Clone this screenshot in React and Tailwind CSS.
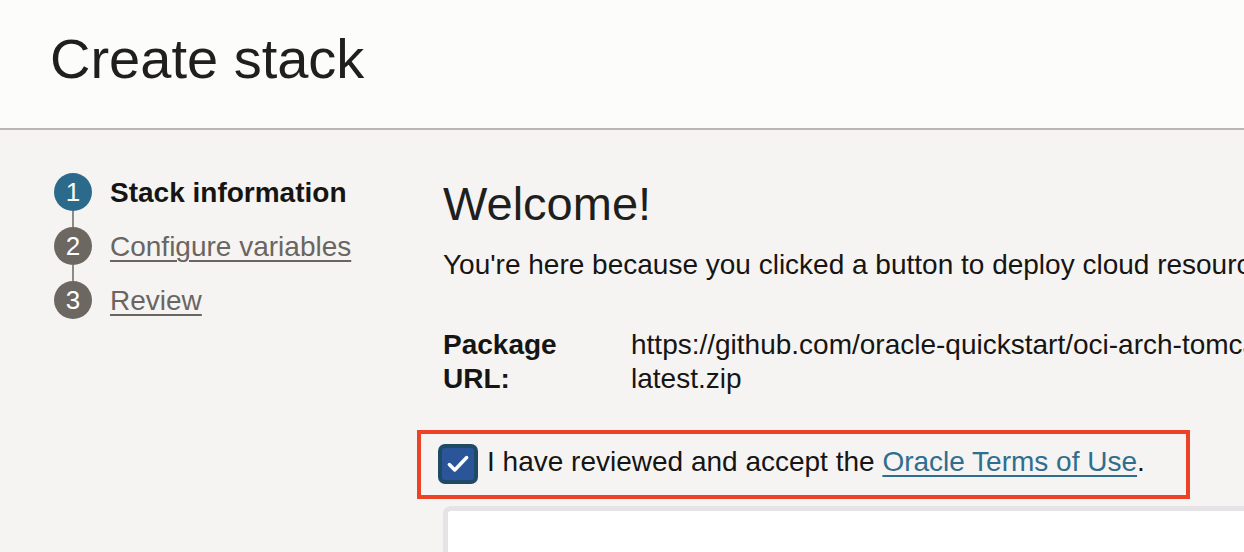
import React from "react";

function Step({ n, label, active, last }) {
  return (
    <div className="flex flex-col">
      <div className="flex items-center h-[38px]">
        <div
          className={
            "w-[38px] h-[38px] rounded-full flex items-center justify-center text-white text-[26px] leading-none " +
            (active ? "bg-[#2c6a8c]" : "bg-[#6d6762]")
          }
        >
          {n}
        </div>
        {active ? (
          <span className="ml-[18px] text-[28px] font-bold text-[#161513] leading-none mt-[2px]">{label}</span>
        ) : (
          <a className="ml-[18px] text-[28px] text-[#6b6560] underline underline-offset-[4px] decoration-[2px] leading-none mt-[2px]">{label}</a>
        )}
      </div>
      {!last && <div className="ml-[18px] w-[2px] h-[16px] bg-[#8f8a86]" />}
    </div>
  );
}

export default function App() {
  return (
    <div className="h-[552px] w-full bg-[#f5f4f2] font-['Liberation_Sans',Arial,sans-serif] overflow-hidden">
      <header className="h-[130px] bg-[#fcfcfb] border-b-2 border-[#bab6b2] flex items-center pl-[50px]">
        <h1 className="text-[56px] text-[#201f1e] leading-none -mt-[10px]">Create stack</h1>
      </header>
      <div className="flex">
        <div className="w-[443px] shrink-0 pl-[54px] pt-[43px]">
          <Step n="1" label="Stack information" active />
          <Step n="2" label="Configure variables" />
          <Step n="3" label="Review" last />
        </div>
        <div className="flex-1 min-w-0 pt-[46px]">
          <h2 className="text-[47px] leading-[56px] text-[#201f1e] whitespace-nowrap">Welcome!</h2>
          <p className="mt-[15px] text-[28px] leading-[36px] text-[#161513] whitespace-nowrap">
            You're here because you clicked a button to deploy cloud resources to your tenancy.
          </p>
          <div className="mt-[45px] grid grid-cols-[188px_1fr] text-[28px] leading-[34px] text-[#161513]">
            <div className="font-bold">
              Package
              <br />
              URL:
            </div>
            <div className="whitespace-nowrap">
              https://github.com/oracle-quickstart/oci-arch-tomcat-mds/releases/latest/download/oci-arch-tomcat-mds-stack-
              <br />
              latest.zip
            </div>
          </div>
          <div className="mt-[34px] -ml-[26px] w-[773px] h-[69px] border-[4px] border-[#ec4226] flex items-center pl-[17px]">
            <div className="w-[40px] h-[40px] rounded-[7px] bg-[#1f4a66] p-[4px] shrink-0 -mt-[1px]">
              <div className="w-full h-full rounded-[3px] bg-[#2a5699] flex items-center justify-center">
                <svg width="26" height="26" viewBox="0 0 24 24" fill="none">
                  <path d="M4 12.5l5 5L20 6" stroke="white" strokeWidth="3.2" strokeLinecap="round" strokeLinejoin="round" />
                </svg>
              </div>
            </div>
            <span className="ml-[9px] -mt-[5px] text-[28px] leading-none text-[#161513] whitespace-nowrap">
              I have reviewed and accept the{" "}
              <a className="text-[#2f6e8e] underline underline-offset-[4px] decoration-[2px]">Oracle Terms of Use</a>.
            </span>
          </div>
          <div className="mt-[7px] h-[60px] bg-white border-t-[5px] border-l-[5px] border-[#e4e4e7] rounded-tl-[8px]" />
        </div>
      </div>
    </div>
  );
}
